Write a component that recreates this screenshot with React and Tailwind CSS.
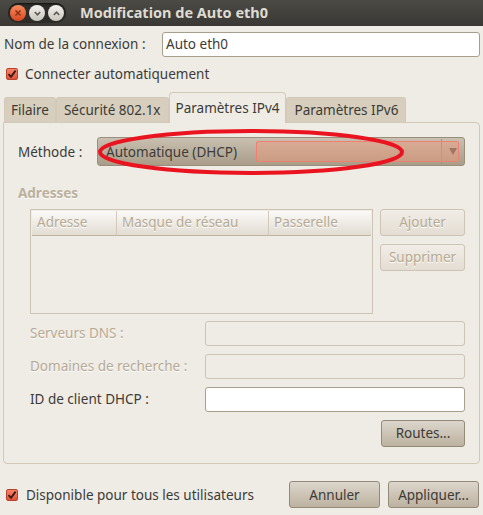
import React from "react";

// Fenêtre "Modification de Auto eth0" (thème Ambiance)
const font = { fontFamily: '"Noto Sans", "DejaVu Sans", sans-serif' };

function Check() {
  return (
    <span className="flex h-[12px] w-[12px] items-center justify-center rounded-[2px] border border-[#b8432a] bg-gradient-to-b from-[#f7836b] to-[#e0523a]">
      <svg width="10" height="10" viewBox="0 0 10 10">
        <path d="M1.5 5.2 L4 7.8 L8.6 1.6" fill="none" stroke="#3a1a12" strokeWidth="1.8" />
      </svg>
    </span>
  );
}

function Btn({ children, disabled, className = "" }) {
  return disabled ? (
    <div className={`flex items-center justify-center rounded-[3px] border border-[#cdc4b5] bg-gradient-to-b from-[#f1ede7] to-[#e4ddd2] text-[#b5a993] [text-shadow:0_1px_0_#fff] ${className}`}>
      {children}
    </div>
  ) : (
    <div className={`flex items-center justify-center rounded-[3px] border border-[#948a79] bg-gradient-to-b from-[#dcd6cc] to-[#bdb2a0] text-[#3c3b37] ${className}`}>
      {children}
    </div>
  );
}

function Entry({ disabled, className = "", children }) {
  return (
    <div className={`rounded-[3px] border ${disabled ? "border-[#cdc4b5] bg-[#efebe5]" : "border-[#a89e8d] bg-white"} ${className}`}>
      {children}
    </div>
  );
}

export default function App() {
  return (
    <div className="flex h-[515px] w-[483px] flex-col bg-[#efebe5] text-[13.5px] text-[#3c3b37]" style={font}>
      {/* barre de titre */}
      <div className="flex h-[26px] items-center bg-gradient-to-b from-[#4b4a45] to-[#393834]">
        <div className="ml-[8px] flex items-center gap-[3px] rounded-full bg-[#2d2c29] p-[2px] shadow-[inset_0_1px_2px_rgba(0,0,0,0.6)]">
          <span className="flex h-[16px] w-[16px] items-center justify-center rounded-full bg-gradient-to-b from-[#f58b5c] to-[#d9471c]">
            <svg width="8" height="8" viewBox="0 0 8 8"><path d="M1.5 1.5 L6.5 6.5 M6.5 1.5 L1.5 6.5" stroke="#8a3214" strokeWidth="1.6" /></svg>
          </span>
          <span className="flex h-[16px] w-[16px] items-center justify-center rounded-full bg-gradient-to-b from-[#f4f2ee] to-[#c9c5bd]">
            <svg width="9" height="9" viewBox="0 0 9 9"><path d="M1.8 3 L4.5 5.8 L7.2 3" fill="none" stroke="#5a5852" strokeWidth="1.6" /></svg>
          </span>
          <span className="flex h-[16px] w-[16px] items-center justify-center rounded-full bg-gradient-to-b from-[#f4f2ee] to-[#c9c5bd]">
            <svg width="9" height="9" viewBox="0 0 9 9"><path d="M1.8 6 L4.5 3.2 L7.2 6" fill="none" stroke="#5a5852" strokeWidth="1.6" /></svg>
          </span>
        </div>
        <span className="ml-[14px] text-[14.5px] font-bold text-[#dfdbd2]">Modification de Auto eth0</span>
      </div>

      {/* nom */}
      <div className="mt-[6px] flex h-[25px] items-center pl-[4px] pr-[3px]">
        <span className="w-[158px]">Nom de la connexion :</span>
        <Entry className="flex h-[25px] flex-1 items-center pl-[3px]">Auto eth0</Entry>
      </div>

      <div className="mt-[7px] flex items-center gap-[7px] pl-[6px]">
        <Check />
        <span>Connecter automatiquement</span>
      </div>

      {/* onglets */}
      <div className="mt-[8px] flex items-end pl-[4px] pr-[2px]">
        <div className="flex h-[25px] items-center rounded-t-[3px] border border-b-0 border-[#d2c9b8] bg-[#d7cebd] px-[6px]">Filaire</div>
        <div className="flex h-[25px] items-center rounded-t-[3px] border border-b-0 border-[#d2c9b8] bg-[#d7cebd] px-[7px]">Sécurité 802.1x</div>
        <div className="relative z-10 -mb-px flex h-[31px] items-center rounded-t-[4px] border border-b-0 border-[#d2c9b8] bg-[#efebe5] px-[6px]">Paramètres IPv4</div>
        <div className="flex h-[25px] items-center rounded-t-[3px] border border-b-0 border-[#d2c9b8] bg-[#d7cebd] px-[7px]">Paramètres IPv6</div>
      </div>

      {/* panneau */}
      <div className="mx-[3px] flex h-[342px] flex-col rounded-b-[4px] rounded-tr-[4px] border border-[#d2c9b8] px-[14px]">
        <div className="relative mt-[14px] flex items-center">
          <span className="w-[79px]">Méthode :</span>
          <div className="relative flex h-[29px] flex-1 items-center rounded-[3px] border border-[#9a8f7c] bg-gradient-to-b from-[#c9c0b1] to-[#a99d89] pl-[8px]">
            <span>Automatique (DHCP)</span>
            <div className="absolute right-[1px] top-[1px] bottom-[1px] flex w-[22px] items-center justify-center border-l border-[#a0947f]">
              <svg width="8" height="7" viewBox="0 0 8 7"><path d="M0 0 L8 0 L4 7 Z" fill="#5e5a52" /></svg>
            </div>
            <div className="absolute left-[158px] right-[5px] top-[3px] bottom-[3px] rounded-[2px] border border-[#f08070] bg-[#f09678]/45" />
          </div>
          <svg className="pointer-events-none absolute left-[79px] top-[-9px]" width="312" height="50" viewBox="0 0 312 50">
            <ellipse cx="154" cy="24" rx="151" ry="21" fill="none" stroke="#e9141f" strokeWidth="4" />
          </svg>
        </div>

        <div className="mt-[17px] font-bold text-[#bbb09c] [text-shadow:0_1px_0_#fff]">Adresses</div>

        <div className="mt-[5px] flex gap-[7px] pl-[12px]">
          <div className="flex h-[105px] w-[343px] flex-col border border-[#cdc4b5] p-[1px]">
            <div className="flex h-[25px] border-b border-[#bfb5a3] bg-gradient-to-b from-[#fbfaf8] to-[#e2dcd2] text-[#b5a993] [text-shadow:0_1px_0_#fff]">
              <div className="flex w-[85px] items-center border-r border-[#d2c9b8] pl-[5px]">Adresse</div>
              <div className="flex w-[152px] items-center border-r border-[#d2c9b8] pl-[5px]">Masque de réseau</div>
              <div className="flex flex-1 items-center pl-[5px]">Passerelle</div>
            </div>
          </div>
          <div className="flex flex-col gap-[8px]">
            <Btn disabled className="h-[27px] w-[85px]">Ajouter</Btn>
            <Btn disabled className="h-[27px] w-[85px]">Supprimer</Btn>
          </div>
        </div>

        <div className="mt-[7px] flex flex-col gap-[8px] pl-[12px]">
          <div className="flex items-center">
            <span className="w-[175px] text-[#b5a993] [text-shadow:0_1px_0_#fff]">Serveurs DNS :</span>
            <Entry disabled className="h-[25px] flex-1" />
          </div>
          <div className="flex items-center">
            <span className="w-[175px] text-[#b5a993] [text-shadow:0_1px_0_#fff]">Domaines de recherche :</span>
            <Entry disabled className="h-[25px] flex-1" />
          </div>
          <div className="flex items-center">
            <span className="w-[175px]">ID de client DHCP :</span>
            <Entry className="h-[25px] flex-1" />
          </div>
        </div>

        <div className="mt-[8px] flex justify-end">
          <Btn className="h-[27px] w-[84px]">Routes...</Btn>
        </div>
      </div>

      {/* bas */}
      <div className="mt-[17px] flex items-center pl-[6px] pr-[4px]">
        <Check />
        <span className="ml-[8px]">Disponible pour tous les utilisateurs</span>
        <div className="ml-auto flex gap-[8px]">
          <Btn className="h-[27px] w-[91px]">Annuler</Btn>
          <Btn className="h-[27px] w-[91px]">Appliquer...</Btn>
        </div>
      </div>
    </div>
  );
}
